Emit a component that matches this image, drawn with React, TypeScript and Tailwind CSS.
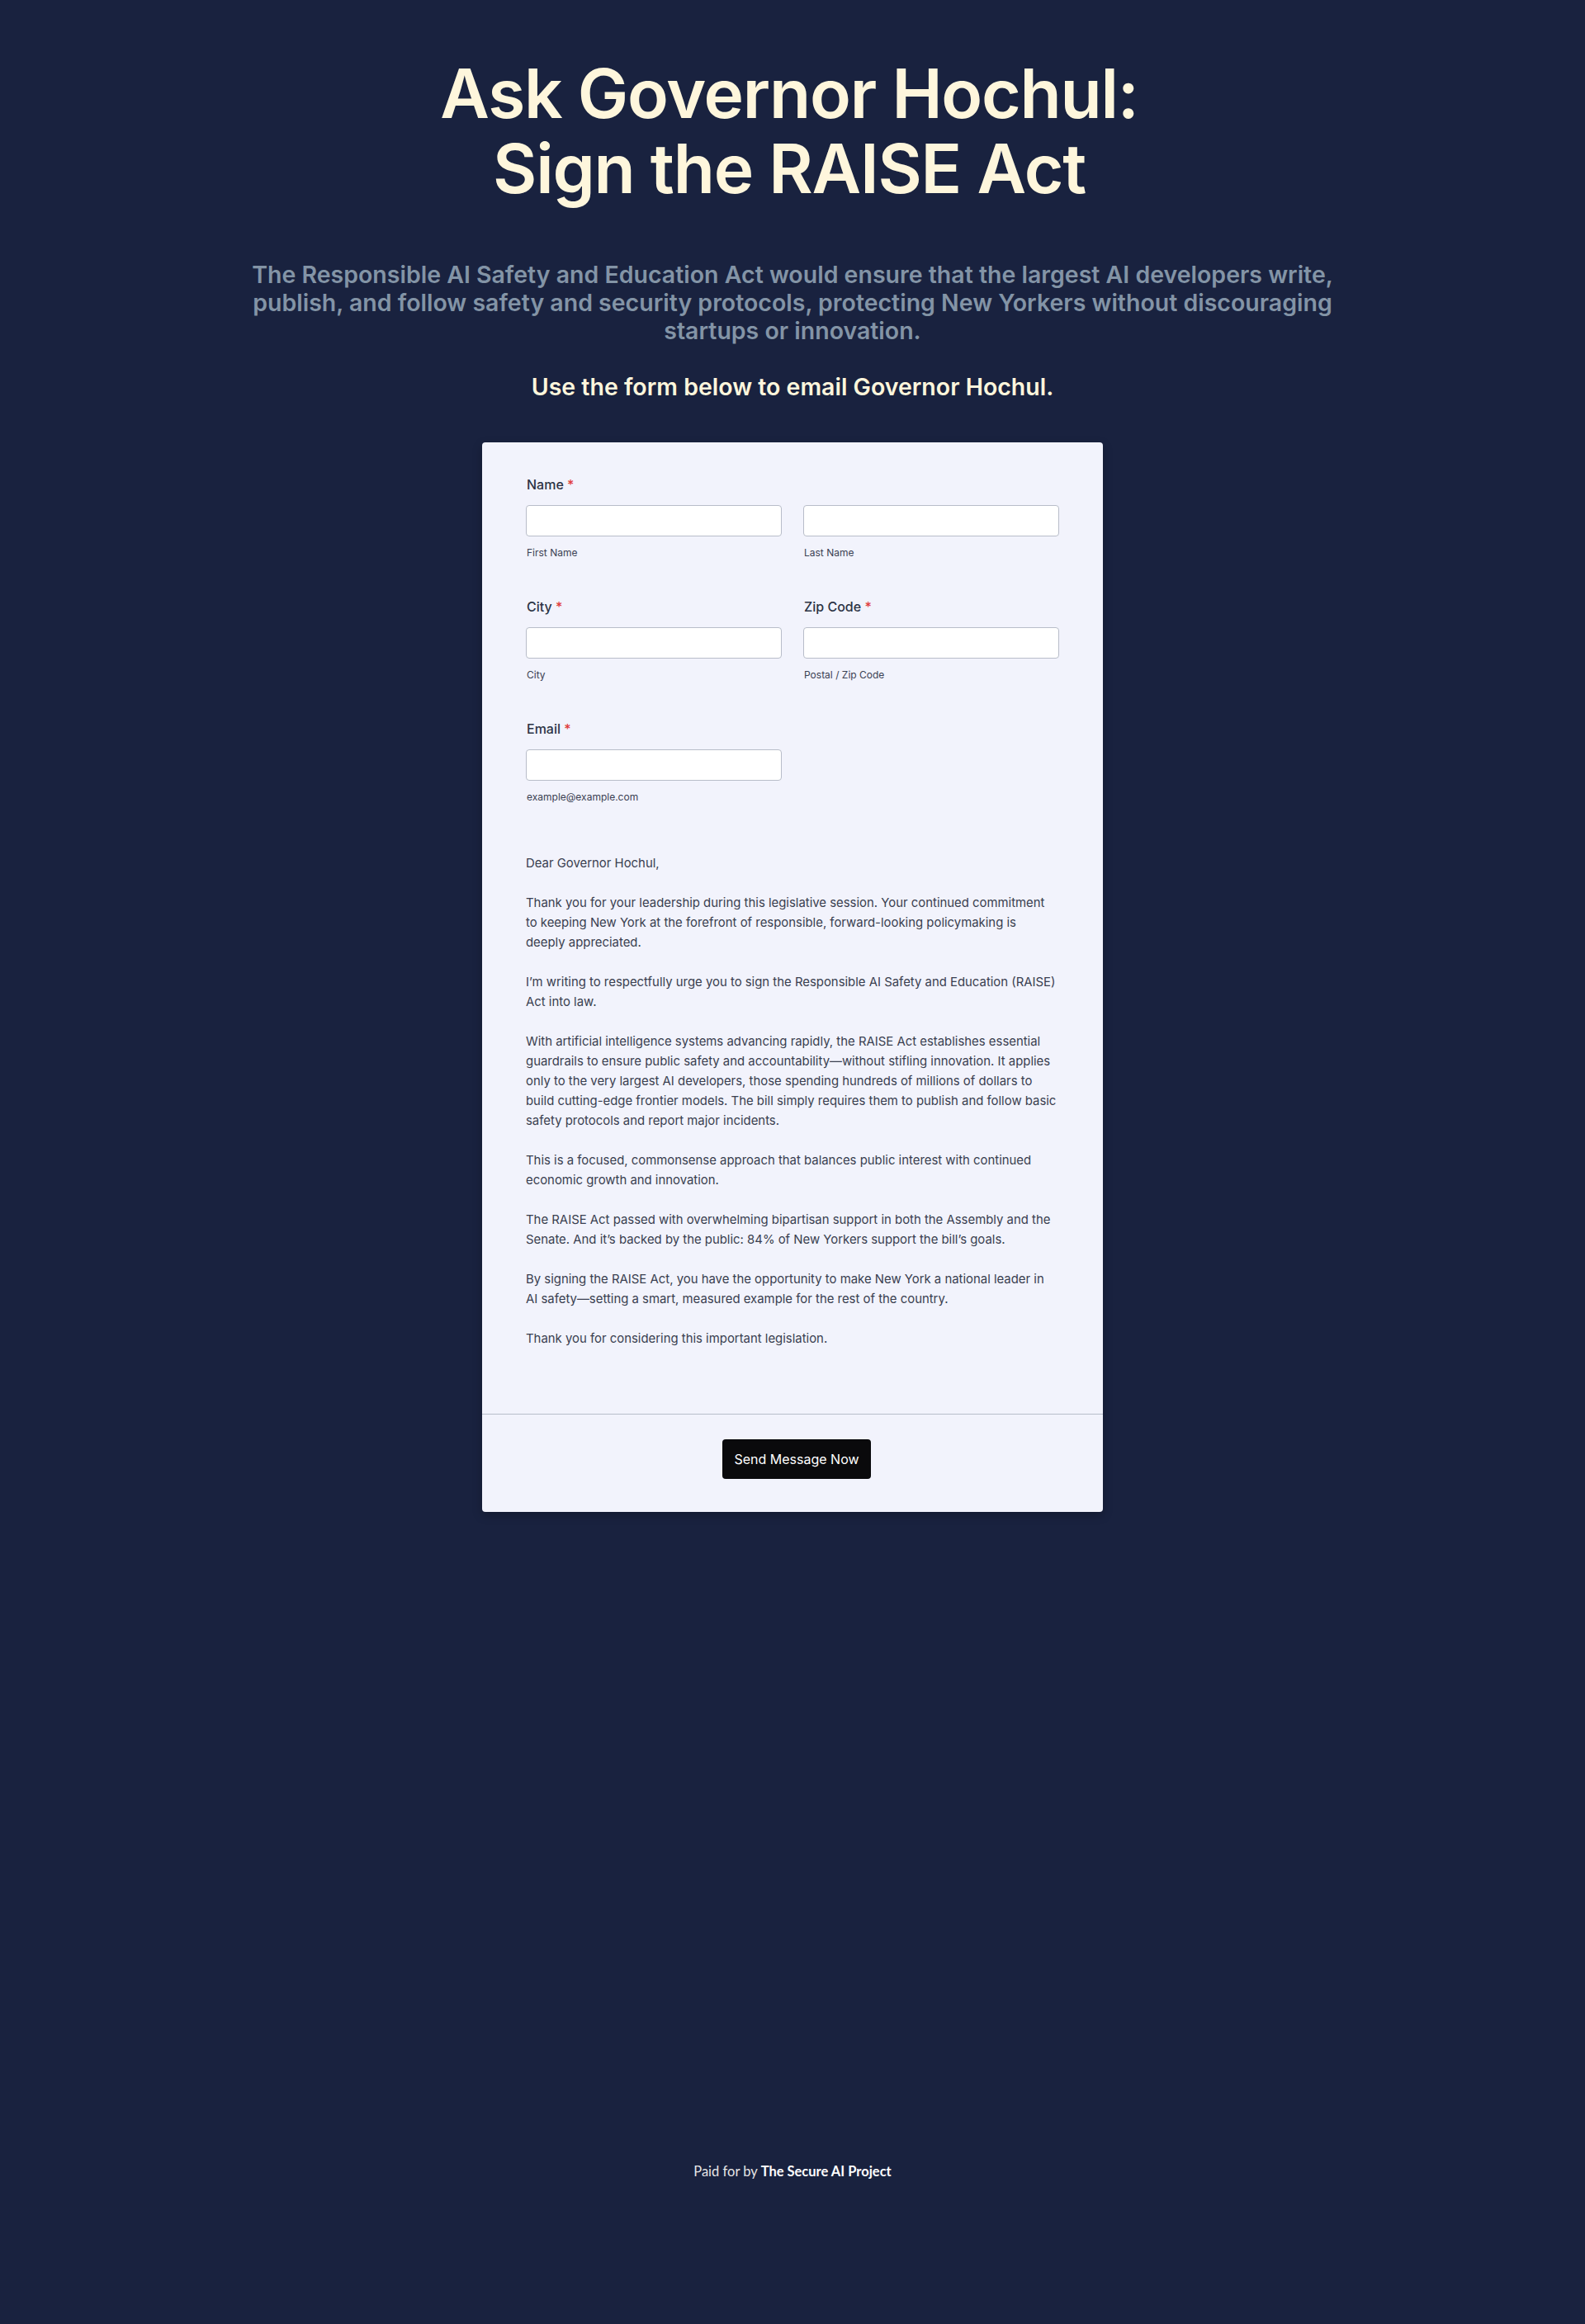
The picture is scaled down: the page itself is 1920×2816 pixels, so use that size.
import React from "react";

const sans = { fontFamily: "Inter, 'Noto Sans', sans-serif" };

function Label({ text }: { text: string }) {
  return (
    <div className="text-[16px] leading-[24px] font-medium text-[#2c3345] pl-[1px]">
      {text} <span className="text-[#e03b3b]">*</span>
    </div>
  );
}

function Input() {
  return (
    <input
      type="text"
      className="block w-full h-[38px] bg-white border border-[#b8bdc9] rounded-[4px] mt-[13px] outline-none"
    />
  );
}

function Sub({ text }: { text: string }) {
  return (
    <div className="text-[12px] leading-[16px] text-[#3b4153] mt-[12px] pl-[1px]">{text}</div>
  );
}

export default function App() {
  return (
    <div className="min-h-screen flex flex-col bg-[#19223f]" style={sans}>
      <main className="flex flex-col items-center pt-[68px]">
        <h1 className="text-[82px] leading-[91px] font-semibold text-[#fef6dc] text-center tracking-[-0.015em] pr-[8px]">
          Ask Governor Hochul:
          <br />
          Sign the RAISE Act
        </h1>
        <p className="mt-[66px] text-[28.5px] leading-[34px] font-semibold text-[#8394a6] text-center">
          The Responsible AI Safety and Education Act would ensure that the largest AI developers write,
          <br />
          publish, and follow safety and security protocols, protecting New Yorkers without discouraging
          <br />
          startups or innovation.
        </p>
        <p className="mt-[34px] text-[28.5px] leading-[34px] font-semibold text-[#fef6dc] text-center">
          Use the form below to email Governor Hochul.
        </p>

        <div className="mt-[50px] w-[752px] bg-[#f2f3fc] rounded-[4px] shadow-[0_4px_12px_rgba(0,0,0,0.25)]">
          <div className="px-[53px] pt-[39px]">
            <Label text="Name" />
            <div className="grid grid-cols-2 gap-x-[26px]">
              <div>
                <Input />
                <Sub text="First Name" />
              </div>
              <div>
                <Input />
                <Sub text="Last Name" />
              </div>
            </div>

            <div className="grid grid-cols-2 gap-x-[26px] mt-[45px]">
              <div>
                <Label text="City" />
                <Input />
                <Sub text="City" />
              </div>
              <div>
                <Label text="Zip Code" />
                <Input />
                <Sub text="Postal / Zip Code" />
              </div>
            </div>

            <div className="grid grid-cols-2 gap-x-[26px] mt-[45px]">
              <div>
                <Label text="Email" />
                <Input />
                <Sub text="example@example.com" />
              </div>
            </div>

            <div className="mt-[60px] pr-[3px] text-[14.9px] leading-[24px] text-[#3a3f50] flex flex-col gap-[24px]">
              <p>Dear Governor Hochul,</p>
              <p>
                Thank you for your leadership during this legislative session. Your continued commitment to
                keeping New York at the forefront of responsible, forward-looking policymaking is deeply
                appreciated.
              </p>
              <p>
                I’m writing to respectfully urge you to sign the Responsible AI Safety and Education (RAISE)
                Act into law.
              </p>
              <p>
                With artificial intelligence systems advancing rapidly, the RAISE Act establishes essential
                guardrails to ensure public safety and accountability—without stifling innovation. It applies
                only to the very largest AI developers, those spending hundreds of millions of dollars to
                build cutting-edge frontier models. The bill simply requires them to publish and follow basic
                safety protocols and report major incidents.
              </p>
              <p>
                This is a focused, commonsense approach that balances public interest with continued economic
                growth and innovation.
              </p>
              <p>
                The RAISE Act passed with overwhelming bipartisan support in both the Assembly and the Senate.
                And it’s backed by the public: 84% of New Yorkers support the bill’s goals.
              </p>
              <p>
                By signing the RAISE Act, you have the opportunity to make New York a national leader in AI
                safety—setting a smart, measured example for the rest of the country.
              </p>
              <p>Thank you for considering this important legislation.</p>
            </div>
          </div>

          <div className="mt-[79px] border-t border-[#b8bdc9] flex justify-center pt-[30px] pb-[40px]">
            <button className="ml-[10px] w-[180px] h-[48px] bg-[#0a0a0c] rounded-[4px] text-white text-[16px]">
              Send Message Now
            </button>
          </div>
        </div>
      </main>

      <div className="flex-1" />

      <footer
        className="text-center text-[16.5px] text-[#e6e6e6] pb-[172px]"
        style={{ fontFamily: "Lato, 'Open Sans', sans-serif" }}
      >
        Paid for by <span className="font-bold text-white">The Secure AI Project</span>
      </footer>
    </div>
  );
}
